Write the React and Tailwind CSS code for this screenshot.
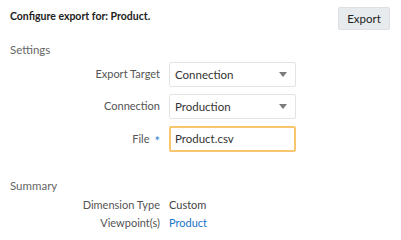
function SelectBox({ value }) {
  return (
    <div className="flex h-[25px] w-[127px] items-center justify-between rounded-[2px] border border-[#e3e3e3] bg-white pl-[5px] pr-[8px]">
      <span className="text-[11.5px] text-[#333]">{value}</span>
      <span className="h-0 w-0 border-x-[4px] border-t-[5px] border-x-transparent border-t-[#7a7a7a]" />
    </div>
  );
}

function FormRow({ label, required, children }) {
  return (
    <div className="flex items-center">
      <div className="flex w-[160px] items-center justify-end text-[11px] text-[#555]">
        {label}
        {required && <span className="ml-[5px] mt-[5px] text-[13px] leading-none text-[#2d7dd2]">*</span>}
      </div>
      <div className="ml-[9px]">{children}</div>
    </div>
  );
}

export default function App() {
  return (
    <div className="h-[240px] w-[401px] bg-white font-['Lato',sans-serif]">
      <div className="flex items-start justify-between pl-[10px] pr-[11px] pt-[7px]">
        <h2 className="mt-[2px] text-[10.5px] font-bold text-[#222]">Configure export for: Product.</h2>
        <button className="h-[23px] w-[52px] rounded-[2px] border border-[#dcdfe3] bg-[#e8ebee] text-[11.5px] text-[#222]">
          Export
        </button>
      </div>

      <div className="mt-[12px] pl-[10px] text-[11.5px] leading-[16px] text-[#666]">Settings</div>

      <div className="mt-[4px] flex flex-col gap-[7px]">
        <FormRow label="Export Target">
          <SelectBox value="Connection" />
        </FormRow>
        <FormRow label="Connection">
          <SelectBox value="Production" />
        </FormRow>
        <FormRow label="File" required>
          <div className="flex h-[26px] w-[127px] items-center rounded-[2px] border-2 border-[#f7c66f] bg-white pl-[4px] text-[11.5px] text-[#333]">
            Product.csv
          </div>
        </FormRow>
      </div>

      <div className="mt-[26px] pl-[10px] text-[11.5px] leading-[16px] text-[#666]">Summary</div>

      <div className="mt-[2px] flex flex-col">
        <div className="flex text-[11px] leading-[18px]">
          <div className="w-[160px] text-right text-[#555]">Dimension Type</div>
          <div className="ml-[9px] text-[#444]">Custom</div>
        </div>
        <div className="flex text-[11px] leading-[18px]">
          <div className="w-[160px] text-right text-[#555]">Viewpoint(s)</div>
          <div className="ml-[9px] text-[#1a73c8]">Product</div>
        </div>
      </div>
    </div>
  );
}
